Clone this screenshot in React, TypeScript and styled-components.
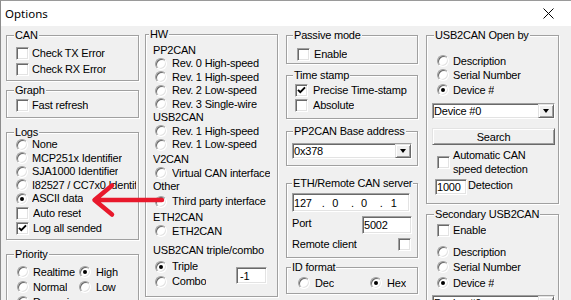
import React from 'react';
import styled, { createGlobalStyle, css } from 'styled-components';

const Global = createGlobalStyle`
  html, body { margin: 0; padding: 0; background: #f0f0f0; }
  body {
    font-family: "Liberation Sans", Arial, sans-serif;
    font-size: 11px;
    color: #000;
    overflow: hidden;
  }
  #root { width: 571px; height: 300px; }
`;

const sunken = css`
  box-sizing: border-box;
  background: #fff;
  border: 1px solid;
  border-color: #a0a0a0 #fff #fff #a0a0a0;
  box-shadow: inset 1px 1px 0 #696969, inset -1px -1px 0 #e3e3e3;
`;

const raised = css`
  box-sizing: border-box;
  background: #f0f0f0;
  border: 1px solid;
  border-color: #e3e3e3 #696969 #696969 #e3e3e3;
  box-shadow: inset 1px 1px 0 #fff, inset -1px -1px 0 #a0a0a0;
`;

const Window = styled.div`
  position: relative;
  width: 571px;
  height: 300px;
  box-sizing: border-box;
  border-left: 1px solid #8c8c8c;
  border-top: 1px solid #9a9a9a;
  background: #f0f0f0;
  overflow: hidden;
`;

const TitleBar = styled.div`
  height: 25px;
  background: #fff;
  display: flex;
  align-items: center;
  justify-content: space-between;
  padding: 0 17px 0 4px;
  font-family: "Noto Sans", "Open Sans", sans-serif;
  font-size: 11.5px;
`;

const Title = styled.span`
  color: #000;
`;

const Body = styled.div`
  display: flex;
  align-items: flex-start;
  padding-left: 5px;
  letter-spacing: -0.2px;
`;

const Column = styled.div<{ $w: number; $ml?: number }>`
  display: flex;
  flex-direction: column;
  flex-shrink: 0;
  width: ${p => p.$w}px;
  margin-left: ${p => p.$ml ?? 0}px;
`;

const Group = styled.div<{ $mt: number; $h: number; $pt: number; $pl?: number; $pr?: number }>`
  position: relative;
  box-sizing: border-box;
  display: flex;
  flex-direction: column;
  flex-shrink: 0;
  margin-top: ${p => p.$mt}px;
  height: ${p => p.$h}px;
  padding: ${p => p.$pt}px ${p => p.$pr ?? 0}px 0 ${p => p.$pl ?? 0}px;
  border: 1px solid #a0a0a0;
  box-shadow: inset 1px 1px 0 #fff, 1px 1px 0 #fff;
`;

const Caption = styled.span<{ $x: number }>`
  position: absolute;
  top: -7px;
  left: ${p => p.$x}px;
  padding: 0 1px;
  line-height: 13px;
  background: #f0f0f0;
  white-space: nowrap;
`;

const Row = styled.div<{ $h?: number; $mt?: number; $pl?: number; $gap?: number }>`
  display: flex;
  align-items: center;
  flex-shrink: 0;
  height: ${p => p.$h ?? 14}px;
  margin-top: ${p => p.$mt ?? 0}px;
  padding-left: ${p => p.$pl ?? 0}px;
  gap: ${p => p.$gap ?? 4}px;
  white-space: nowrap;
  min-width: 0;
`;

const Label = styled.span`
  overflow: hidden;
  min-width: 0;
  line-height: 13px;
`;

const RadioMark = styled.span<{ $on?: boolean }>`
  position: relative;
  flex-shrink: 0;
  width: 12px;
  height: 12px;
  border-radius: 50%;
  ${sunken};
  &::after {
    content: '';
    display: ${p => (p.$on ? 'block' : 'none')};
    position: absolute;
    left: 3px;
    top: 3px;
    width: 4px;
    height: 4px;
    border-radius: 50%;
    background: #000;
  }
`;

const CheckMark = styled.span<{ $push?: boolean }>`
  flex-shrink: 0;
  width: 13px;
  height: 13px;
  display: flex;
  align-items: center;
  justify-content: center;
  margin-left: ${p => (p.$push ? 'auto' : '0')};
  margin-right: ${p => (p.$push ? '1px' : '0')};
  ${sunken};
`;

const Field = styled.div<{ $w: number; $h: number; $mt?: number; $ml?: number; $mr?: number; $pl?: number }>`
  ${sunken};
  flex-shrink: 0;
  display: flex;
  align-items: center;
  width: ${p => p.$w}px;
  height: ${p => p.$h}px;
  margin: ${p => p.$mt ?? 0}px ${p => p.$mr ?? 0}px 0 ${p => p.$ml ?? 0}px;
  padding-left: ${p => p.$pl ?? 1}px;
  white-space: nowrap;
  overflow: hidden;
`;

const DropButton = styled.span`
  ${raised};
  margin-left: auto;
  width: 16px;
  height: 100%;
  display: flex;
  align-items: center;
  justify-content: center;
  &::after {
    content: '';
    width: 0;
    height: 0;
    border-left: 3.5px solid transparent;
    border-right: 3.5px solid transparent;
    border-top: 4px solid #000;
  }
`;

const PushButton = styled.div<{ $w: number; $h: number; $mt?: number }>`
  ${raised};
  flex-shrink: 0;
  width: ${p => p.$w}px;
  height: ${p => p.$h}px;
  margin-top: ${p => p.$mt ?? 0}px;
  display: flex;
  align-items: center;
  justify-content: center;
`;

const IpPart = styled.span<{ $ml: number }>`
  margin-left: ${p => p.$ml}px;
`;

const SplitRow = styled.div<{ $mt?: number; $h: number; $start?: boolean }>`
  display: flex;
  align-items: flex-start;
  justify-content: ${p => (p.$start ? 'flex-start' : 'space-between')};
  flex-shrink: 0;
  height: ${p => p.$h}px;
  margin-top: ${p => p.$mt ?? 0}px;
`;

const StackLabel = styled.span<{ $mt?: number; $ml?: number }>`
  line-height: 13px;
  margin-top: ${p => p.$mt ?? 0}px;
  margin-left: ${p => p.$ml ?? 0}px;
`;

const OptionGrid = styled.div<{ $cols: string; $row: number }>`
  display: grid;
  grid-template-columns: ${p => p.$cols};
  grid-auto-rows: ${p => p.$row}px;
  align-items: center;
`;

const TwoLines = styled.span`
  line-height: 13.5px;
  white-space: nowrap;
`;

const Stack = styled.div`
  display: flex;
  flex-direction: column;
`;

const ArrowOverlay = styled.svg`
  position: absolute;
  left: -1px;
  top: -1px;
  pointer-events: none;
`;

type RowProps = { label: string; on?: boolean; h?: number; mt?: number; pl?: number; gap?: number };

function Radio({ label, on, h, mt, pl, gap }: RowProps) {
  return (
    <Row $h={h} $mt={mt} $pl={pl} $gap={gap}>
      <RadioMark $on={on} />
      <Label>{label}</Label>
    </Row>
  );
}

function Tick() {
  return (
    <svg width="9" height="9" viewBox="0 0 9 9">
      <path d="M1 3.8 L3.3 6.2 L8 1.4" fill="none" stroke="#000" strokeWidth="1.9" />
    </svg>
  );
}

function Check({ label, on, h, mt, pl, gap }: RowProps) {
  return (
    <Row $h={h} $mt={mt} $pl={pl} $gap={gap ?? 3}>
      <CheckMark>{on ? <Tick /> : null}</CheckMark>
      <Label>{label}</Label>
    </Row>
  );
}

function Text({ label, h, mt }: { label: string; h?: number; mt?: number }) {
  return (
    <Row $h={h ?? 13.5} $mt={mt}>
      <Label>{label}</Label>
    </Row>
  );
}

function Combo({ value, w, mt, ml }: { value: string; w: number; mt?: number; ml?: number }) {
  return (
    <Field $w={w} $h={16} $mt={mt} $ml={ml} $pl={1}>
      <span>{value}</span>
      <DropButton />
    </Field>
  );
}

export default function App() {
  return (
    <>
      <Global />
      <Window>
        <TitleBar>
          <Title>Options</Title>
          <svg width="11" height="11" viewBox="0 0 11 11">
            <path d="M0.5 0.5 L10.5 10.5 M10.5 0.5 L0.5 10.5" stroke="#000" strokeWidth="1" />
          </svg>
        </TitleBar>
        <Body>
          <Column $w={133}>
            <Group $mt={9} $h={46} $pt={9} $pl={9}>
              <Caption $x={7}>CAN</Caption>
              <Check label="Check TX Error" h={16} />
              <Check label="Check RX Error" h={16} />
            </Group>
            <Group $mt={9} $h={28} $pt={6} $pl={9}>
              <Caption $x={7}>Graph</Caption>
              <Check label="Fast refresh" h={16} />
            </Group>
            <Group $mt={14} $h={108} $pt={5} $pl={9} $pr={2}>
              <Caption $x={7}>Logs</Caption>
              <Radio label="None" h={13.5} />
              <Radio label="MCP251x Identifier" h={13.5} />
              <Radio label="SJA1000 Identifier" h={13.5} />
              <Radio label="I82527 / CC7x0 Identifier" h={13.5} />
              <Radio label="ASCII data" on h={13.5} />
              <Check label="Auto reset" h={15} gap={4} />
              <Check label="Log all sended" on h={15} gap={4} />
            </Group>
            <Group $mt={14} $h={70} $pt={9.5} $pl={10}>
              <Caption $x={7}>Priority</Caption>
              <OptionGrid $cols="62px auto" $row={15}>
                <Radio label="Realtime" h={15} />
                <Radio label="High" on h={15} gap={5} />
                <Radio label="Normal" h={15} />
                <Radio label="Low" h={15} gap={5} />
                <Radio label="Dynamic" h={15} />
              </OptionGrid>
            </Group>
          </Column>

          <Column $w={133} $ml={6}>
            <Group $mt={8} $h={263} $pt={8.25} $pl={7}>
              <Caption $x={3}>HW</Caption>
              <Text label="PP2CAN" />
              <Radio label="Rev. 0 High-speed" h={13.5} pl={2} gap={5} />
              <Radio label="Rev. 1 High-speed" h={13.5} pl={2} gap={5} />
              <Radio label="Rev. 2 Low-speed" h={13.5} pl={2} gap={5} />
              <Radio label="Rev. 3 Single-wire" h={13.5} pl={2} gap={5} />
              <Text label="USB2CAN" />
              <Radio label="Rev. 1 High-speed" h={13.5} pl={2} gap={5} />
              <Radio label="Rev. 1 Low-speed" h={13.5} pl={2} gap={5} />
              <Text label="V2CAN" mt={1.5} />
              <Radio label="Virtual CAN interface" h={13.5} pl={2} gap={5} />
              <Text label="Other" />
              <Radio label="Third party interface" h={13.5} mt={1.5} pl={2} gap={5} />
              <Text label="ETH2CAN" mt={2.5} />
              <Radio label="ETH2CAN" h={13.5} pl={2} gap={5} />
              <Text label="USB2CAN triple/combo" mt={6} />
              <SplitRow $h={32}>
                <Stack>
                  <Radio label="Triple" on h={13.5} mt={2.5} pl={2} gap={5} />
                  <Radio label="Combo" h={13.5} mt={1.5} pl={2} gap={5} />
                </Stack>
                <Field $w={31} $h={17} $mt={9.75} $mr={10} $pl={3}>-1</Field>
              </SplitRow>
            </Group>
          </Column>

          <Column $w={132} $ml={8}>
            <Group $mt={9} $h={29} $pt={10} $pl={10}>
              <Caption $x={6}>Passive mode</Caption>
              <Check label="Enable" h={16} gap={4} />
            </Group>
            <Group $mt={11} $h={44} $pt={6.5} $pl={8}>
              <Caption $x={6}>Time stamp</Caption>
              <Check label="Precise Time-stamp" on h={15} gap={5} />
              <Check label="Absolute" h={15} gap={5} />
            </Group>
            <Group $mt={12} $h={35} $pt={11} $pl={5}>
              <Caption $x={6}>PP2CAN Base address</Caption>
              <Combo value="0x378" w={120} />
            </Group>
            <Group $mt={17} $h={75} $pt={9} $pl={5} $pr={5}>
              <Caption $x={5}>ETH/Remote CAN server</Caption>
              <Field $w={118} $h={19} $pl={0}>
                <IpPart $ml={1}>127</IpPart>
                <IpPart $ml={10}>.</IpPart>
                <IpPart $ml={7.5}>0</IpPart>
                <IpPart $ml={13}>.</IpPart>
                <IpPart $ml={7}>0</IpPart>
                <IpPart $ml={13}>.</IpPart>
                <IpPart $ml={8}>1</IpPart>
              </Field>
              <SplitRow $h={18} $mt={4}>
                <StackLabel $mt={0.5}>Port</StackLabel>
                <Field $w={50} $h={18} $pl={1}>5002</Field>
              </SplitRow>
              <Row $h={13} $mt={4} $gap={0}>
                <Label>Remote client</Label>
                <CheckMark $push />
              </Row>
            </Group>
            <Group $mt={9} $h={27} $pt={8.5} $pl={11}>
              <Caption $x={4}>ID format</Caption>
              <OptionGrid $cols="72px auto" $row={13}>
                <Radio label="Dec" h={13} gap={5} />
                <Radio label="Hex" on h={13} gap={5} />
              </OptionGrid>
            </Group>
          </Column>

          <Column $w={133} $ml={8}>
            <Group $mt={9} $h={169} $pt={18} $pl={5}>
              <Caption $x={7}>USB2CAN Open by</Caption>
              <Radio label="Description" pl={5} />
              <Radio label="Serial Number" pl={5} />
              <Radio label="Device #" on pl={5} mt={1} />
              <Combo value="Device #0" w={123} mt={6} />
              <PushButton $w={123} $h={17} $mt={9}>Search</PushButton>
              <Row $h={27} $mt={4} $pl={5} $gap={3}>
                <CheckMark />
                <TwoLines>
                  Automatic CAN
                  <br />
                  speed detection
                </TwoLines>
              </Row>
              <SplitRow $h={16} $mt={3} $start>
                <Field $w={32} $h={16} $ml={3} $pl={1}>1000</Field>
                <StackLabel $ml={1}>Detection</StackLabel>
              </SplitRow>
            </Group>
            <Group $mt={10} $h={100} $pt={7.5} $pl={5}>
              <Caption $x={7}>Secondary USB2CAN</Caption>
              <Check label="Enable" h={15} pl={5} gap={3} />
              <Radio label="Description" h={15} mt={7} pl={5} />
              <Radio label="Serial Number" h={15} pl={5} />
              <Radio label="Device #" on h={15} mt={1} pl={5} />
              <Combo value="Device #0" w={123} mt={4.5} />
            </Group>
          </Column>
        </Body>

        <ArrowOverlay width="200" height="240" viewBox="0 0 200 240">
          <path
            d="M162 200 L95 200 M112 185.5 L94.5 200 L112 214.5"
            fill="none"
            stroke="#e8192c"
            strokeWidth="4.5"
            strokeLinecap="round"
            strokeLinejoin="round"
          />
        </ArrowOverlay>
      </Window>
    </>
  );
}
